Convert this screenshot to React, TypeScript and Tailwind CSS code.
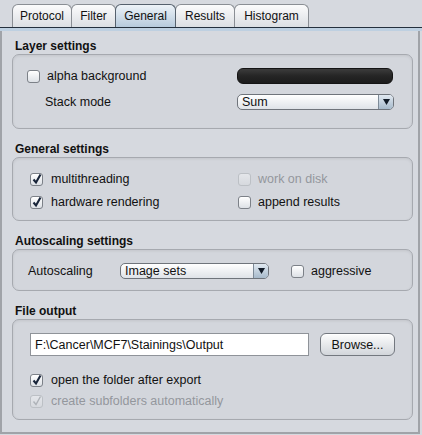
import React from "react";

type CheckProps = { checked?: boolean; disabled?: boolean };

function Checkbox({ checked, disabled }: CheckProps) {
  return (
    <div
      className={
        "relative w-[13px] h-[13px] shrink-0 rounded-[3px] border " +
        (disabled
          ? "border-[#bcc0c5] bg-gradient-to-b from-[#e4e6ea] to-[#d6d9de]"
          : "border-[#7c8188] bg-gradient-to-b from-[#ffffff] to-[#dde1e6] shadow-[inset_0_1px_0_#ffffff]")
      }
    >
      {checked && (
        <svg className="absolute -left-px -top-[2px]" width="14" height="14" viewBox="0 0 14 14">
          <path
            d="M3.5 7.5 L6 10.5 L10.5 2.5"
            fill="none"
            stroke={disabled ? "#aeb2b8" : "#18253a"}
            strokeWidth={disabled ? 1.4 : 2.1}
          />
        </svg>
      )}
    </div>
  );
}

function CheckRow({ label, checked, disabled, gap = "gap-[8px]" }: CheckProps & { label: string; gap?: string }) {
  return (
    <div className={"flex items-center h-[16px] " + gap}>
      <Checkbox checked={checked} disabled={disabled} />
      <span className={disabled ? "text-[#93979d]" : "text-[#111]"}>{label}</span>
    </div>
  );
}

function Select({ value, width }: { value: string; width: string }) {
  return (
    <div
      className={
        width +
        " h-[16px] flex rounded-[5px] border border-[#6f747b] bg-gradient-to-b from-[#ffffff] to-[#dfe3e8] overflow-hidden"
      }
    >
      <div className="flex-1 pl-[4px] leading-[14px] text-[#111]">{value}</div>
      <div className="w-[15px] border-l border-[#7d8a97] bg-gradient-to-b from-[#e1e9f1] to-[#a7bacb] flex items-center justify-center">
        <svg width="7" height="6" viewBox="0 0 7 6">
          <path d="M0 0 H7 L3.5 6 Z" fill="#111a26" />
        </svg>
      </div>
    </div>
  );
}

function Section({ title, height, first, children }: { title: string; height: string; first?: boolean; children: React.ReactNode }) {
  return (
    <div className={first ? "pt-[8px]" : "mt-[13px]"}>
      <div className="h-[14px] pl-[13px] text-[12px] font-bold text-[#111]">{title}</div>
      <div
        className={
          height +
          " mt-px ml-[10px] w-[401px] rounded-[7px] border border-[#a6a9af] bg-[#d3d6dc] shadow-[inset_0_1px_3px_rgba(0,0,0,0.08)]"
        }
      >
        {children}
      </div>
    </div>
  );
}

const tabs = [
  { name: "Protocol", w: "w-[60px]" },
  { name: "Filter", w: "w-[45px]" },
  { name: "General", w: "w-[61px]", active: true },
  { name: "Results", w: "w-[60px]" },
  { name: "Histogram", w: "w-[75px]" },
];

export default function App() {
  return (
    <div className="w-[422px] h-[435px] bg-[#d6d9df] pt-[4px] text-[12.5px] leading-[14px] font-['Liberation_Sans',Arial,sans-serif]">
      <div className="flex h-[23px] pl-[12px] text-[12px]">
        {tabs.map((t, i) => (
          <div
            key={t.name}
            className={
              t.w +
              " h-[23px] flex items-center justify-center rounded-t-[6px] border border-b-0 text-[#111] " +
              (i > 0 ? "-ml-px " : "") +
              (t.active
                ? "relative border-[#56616d] bg-gradient-to-b from-[#eef3f8] to-[#b6cadc]"
                : "border-[#8a8e94] bg-gradient-to-b from-[#fbfbfc] to-[#dcdfe3]")
            }
          >
            {t.name}
          </div>
        ))}
      </div>
      <div className="h-px bg-[#24303d]" />
      <div className="h-[3px] bg-[#bed0e1]" />

      <div className="w-[420px] h-[403px] border-x-2 border-b-2 border-[#a0a3a8]">
        <Section title="Layer settings" height="h-[75px]" first>
          <div className="pt-[13px]">
            <div className="flex items-center h-[16px]">
              <div className="w-[224px] pl-[14px]">
                <CheckRow label="alpha background" gap="gap-[7px]" />
              </div>
              <div className="w-[156px] h-[16px] rounded-[6px] border border-[#141414] bg-gradient-to-b from-[#3c3c3c] via-[#252525] to-[#1c1c1c]" />
            </div>
            <div className="flex items-center h-[16px] mt-[10px]">
              <div className="w-[224px] pl-[32px] text-[#111]">Stack mode</div>
              <Select value="Sum" width="w-[157px]" />
            </div>
          </div>
        </Section>

        <Section title="General settings" height="h-[64px]">
          <div className="pt-[13px]">
            <div className="flex">
              <div className="w-[225px] pl-[17px]">
                <CheckRow label="multithreading" checked />
              </div>
              <CheckRow label="work on disk" disabled gap="gap-[7px]" />
            </div>
            <div className="flex mt-[7px]">
              <div className="w-[225px] pl-[17px]">
                <CheckRow label="hardware rendering" checked />
              </div>
              <CheckRow label="append results" gap="gap-[7px]" />
            </div>
          </div>
        </Section>

        <Section title="Autoscaling settings" height="h-[42px]">
          <div className="pt-[13px] flex items-center h-[29px]">
            <div className="w-[107px] pl-[15px] text-[#111]">Autoscaling</div>
            <Select value="Image sets" width="w-[149px]" />
            <div className="ml-[22px]">
              <CheckRow label="aggressive" gap="gap-[7px]" />
            </div>
          </div>
        </Section>

        <Section title="File output" height="h-[101px]">
          <div className="pt-[13px] pl-[17px]">
            <div className="flex">
              <div className="w-[279px] h-[23px] border border-[#8f9399] bg-white pl-[4px] flex items-center text-[#111]">
                {"F:\\Cancer\\MCF7\\Stainings\\Output"}
              </div>
              <div className="ml-[11px] w-[75px] h-[23px] rounded-[6px] border border-[#73787f] bg-gradient-to-b from-[#fdfdfd] to-[#d2d6db] flex items-center justify-center text-[#111] shadow-[inset_0_1px_0_#ffffff]">
                Browse...
              </div>
            </div>
            <div className="mt-[16px]">
              <CheckRow label="open the folder after export" checked />
            </div>
            <div className="mt-[5px]">
              <CheckRow label="create subfolders automatically" checked disabled />
            </div>
          </div>
        </Section>
      </div>
    </div>
  );
}
